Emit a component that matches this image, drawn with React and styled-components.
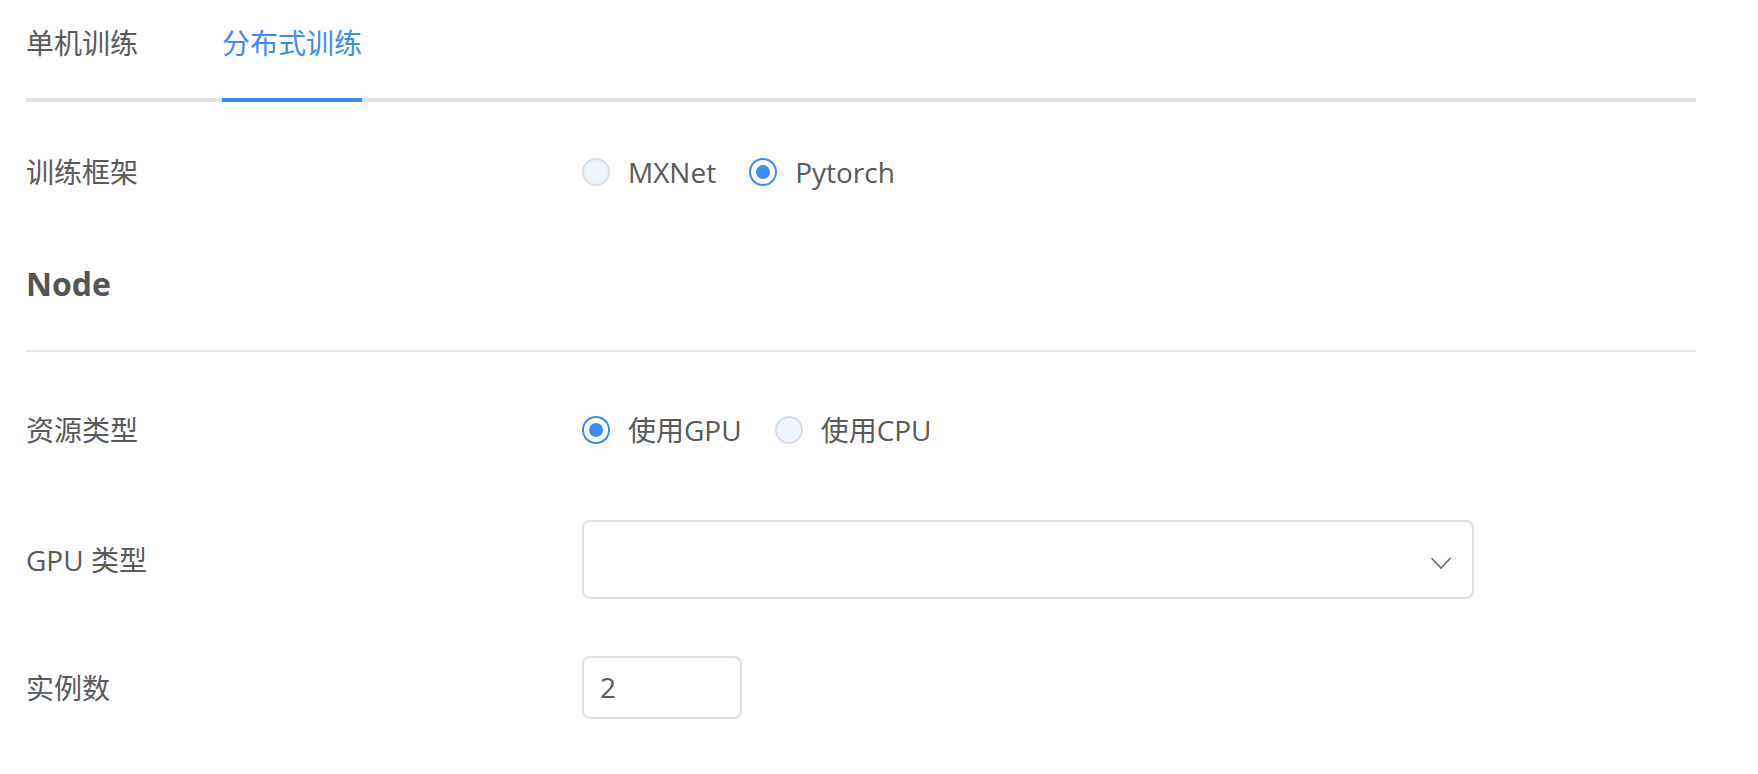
import React, { useState } from 'react'
import styled, { createGlobalStyle } from 'styled-components'

const GlobalStyle = createGlobalStyle`
    body {
        margin: 0;
        background: #ffffff;
        font-family: "Open Sans", "Noto Sans CJK SC", sans-serif;
        color: #595959;
    }
`

export default function App() {
    const [tab, setTab] = useState('dist')
    const [framework, setFramework] = useState('pytorch')
    const [resource, setResource] = useState('gpu')

    return (
        <Page>
            <GlobalStyle />
            <Tabs>
                <Tab $active={tab === 'single'} onClick={() => setTab('single')}>
                    单机训练
                </Tab>
                <Tab $active={tab === 'dist'} onClick={() => setTab('dist')}>
                    分布式训练
                </Tab>
            </Tabs>

            <Row $top={30} $height={80}>
                <Label>训练框架</Label>
                <RadioGroup>
                    <Radio checked={framework === 'mxnet'} onClick={() => setFramework('mxnet')}>
                        MXNet
                    </Radio>
                    <Radio checked={framework === 'pytorch'} onClick={() => setFramework('pytorch')}>
                        Pytorch
                    </Radio>
                </RadioGroup>
            </Row>

            <SectionTitle>Node</SectionTitle>
            <Divider />

            <Row $top={38} $height={80}>
                <Label>资源类型</Label>
                <RadioGroup>
                    <Radio checked={resource === 'gpu'} onClick={() => setResource('gpu')}>
                        使用GPU
                    </Radio>
                    <Radio checked={resource === 'cpu'} onClick={() => setResource('cpu')}>
                        使用CPU
                    </Radio>
                </RadioGroup>
            </Row>

            <Row $top={50} $height={79}>
                <Label>GPU 类型</Label>
                <Select>
                    <span />
                    <svg width="22" height="14" viewBox="0 0 22 14">
                        <polyline points="1.5,2 11,12 20.5,2" fill="none" stroke="#6b6b6b" strokeWidth="1.6" />
                    </svg>
                </Select>
            </Row>

            <Row $top={57} $height={63}>
                <Label>实例数</Label>
                <NumberInput defaultValue="2" />
            </Row>
        </Page>
    )
}

function Radio({ checked, onClick, children }) {
    return (
        <RadioItem onClick={onClick}>
            <RadioCircle $checked={checked} />
            <span>{children}</span>
        </RadioItem>
    )
}

const Page = styled.div`
    width: 1670px;
    padding-left: 26px;
    font-size: 28px;
`

const Tabs = styled.div`
    display: flex;
    gap: 84px;
    border-bottom: 4px solid #dfe1e7;
`

const Tab = styled.div`
    line-height: 40px;
    padding: 23px 0 35px;
    margin-bottom: -4px;
    border-bottom: 4px solid ${p => (p.$active ? '#3b8cf0' : 'transparent')};
    color: ${p => (p.$active ? '#3b8cf0' : '#595959')};
    cursor: pointer;
`

const Row = styled.div`
    display: grid;
    grid-template-columns: 556px 1fr;
    align-items: center;
    margin-top: ${p => p.$top}px;
    height: ${p => p.$height}px;
`

const Label = styled.div`
    line-height: 40px;
    color: #595959;
`

const RadioGroup = styled.div`
    display: flex;
    align-items: center;
    gap: 33px;
`

const RadioItem = styled.label`
    display: flex;
    align-items: center;
    gap: 18px;
    line-height: 40px;
    cursor: pointer;
`

const RadioCircle = styled.span`
    box-sizing: border-box;
    width: 28px;
    height: 28px;
    border-radius: 50%;
    border: 2px solid ${p => (p.$checked ? '#3b8cf0' : '#d9dde4')};
    background: ${p => (p.$checked ? '#ffffff' : '#eef4fd')};
    display: flex;
    align-items: center;
    justify-content: center;

    &::after {
        content: '';
        width: 14px;
        height: 14px;
        border-radius: 50%;
        background: #3b8cf0;
        display: ${p => (p.$checked ? 'block' : 'none')};
    }
`

const SectionTitle = styled.div`
    margin-top: 52px;
    line-height: 40px;
    font-size: 32px;
    font-weight: 700;
    color: #555555;
`

const Divider = styled.div`
    margin-top: 46px;
    height: 2px;
    background: #e6e8ec;
`

const Select = styled.div`
    box-sizing: border-box;
    width: 892px;
    height: 79px;
    border: 2px solid #dcdfe6;
    border-radius: 8px;
    display: flex;
    align-items: center;
    justify-content: space-between;
    padding: 0 20px 0 18px;
    cursor: pointer;

    svg {
        margin-top: 6px;
    }
`

const NumberInput = styled.input`
    box-sizing: border-box;
    width: 160px;
    height: 63px;
    border: 2px solid #dcdfe6;
    border-radius: 8px;
    padding: 0 0 2px 16px;
    font: inherit;
    font-size: 28px;
    color: #595959;
    outline: none;
`
